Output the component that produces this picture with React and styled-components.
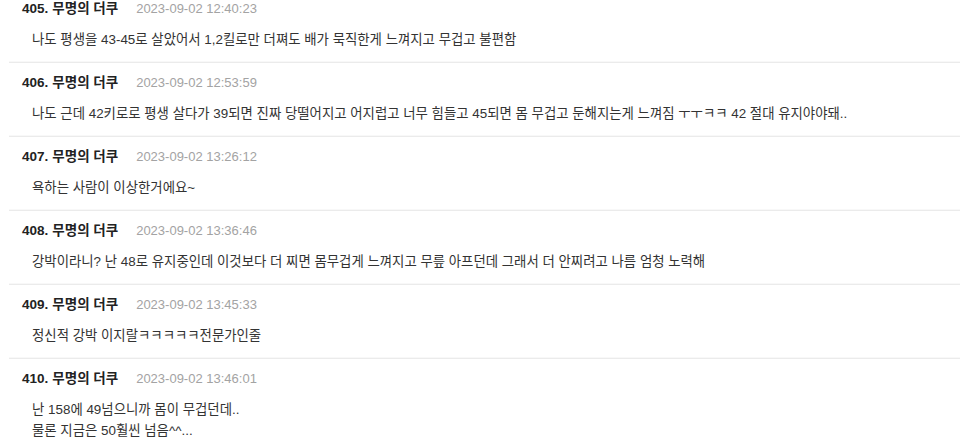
import React from "react";
import styled, { createGlobalStyle } from "styled-components";

const Global = createGlobalStyle`
  html, body { margin: 0; padding: 0; background: #fff; }
  body { font-family: "Liberation Sans", "Noto Sans CJK KR", sans-serif; overflow: hidden; }
`;

const List = styled.div`
  margin-top: -11px;
  padding-left: 9px;
`;

const Row = styled.div`
  padding: 11px 0 12px 13px;
  border-bottom: 1px solid #ebebeb;
  box-shadow: 0 -1px 0 #f8f8f8 inset;
  &:last-child { border-bottom: none; box-shadow: none; }
`;

const Header = styled.div`
  display: flex;
  align-items: baseline;
  height: 18px;
  line-height: 18px;
`;

const Num = styled.span`
  font-weight: 700;
  font-size: 13.5px;
  color: #222;
  margin-right: 4px;
`;

const Name = styled.span`
  font-weight: 700;
  font-size: 13.5px;
  color: #222;
`;

const Date = styled.span`
  font-size: 13px;
  color: #a3a3a3;
  margin-left: 18px;
`;

const Body = styled.div`
  margin-top: 11px;
  padding-left: 10px;
  font-size: 13.4px;
  line-height: 21px;
  color: #333;
  white-space: pre-line;
`;

const comments = [
  { n: 405, t: "2023-09-02 12:40:23", b: "나도 평생을 43-45로 살았어서 1,2킬로만 더쪄도 배가 묵직한게 느껴지고 무겁고 불편함" },
  { n: 406, t: "2023-09-02 12:53:59", b: "나도 근데 42키로로 평생 살다가 39되면 진짜 당떨어지고 어지럽고 너무 힘들고 45되면 몸 무겁고 둔해지는게 느껴짐 ㅜㅜㅋㅋ 42 절대 유지야야돼.." },
  { n: 407, t: "2023-09-02 13:26:12", b: "욕하는 사람이 이상한거에요~" },
  { n: 408, t: "2023-09-02 13:36:46", b: "강박이라니? 난 48로 유지중인데 이것보다 더 찌면 몸무겁게 느껴지고 무릎 아프던데 그래서 더 안찌려고 나름 엄청 노력해" },
  { n: 409, t: "2023-09-02 13:45:33", b: "정신적 강박 이지랄ㅋㅋㅋㅋㅋ전문가인줄" },
  { n: 410, t: "2023-09-02 13:46:01", b: "난 158에 49넘으니까 몸이 무겁던데..\n물론 지금은 50훨씬 넘음^^..." },
];

export default function App() {
  return (
    <>
      <Global />
      <List>
        {comments.map((c) => (
          <Row key={c.n}>
            <Header>
              <Num>{c.n}.</Num>
              <Name>무명의 더쿠</Name>
              <Date>{c.t}</Date>
            </Header>
            <Body>{c.b}</Body>
          </Row>
        ))}
      </List>
    </>
  );
}
